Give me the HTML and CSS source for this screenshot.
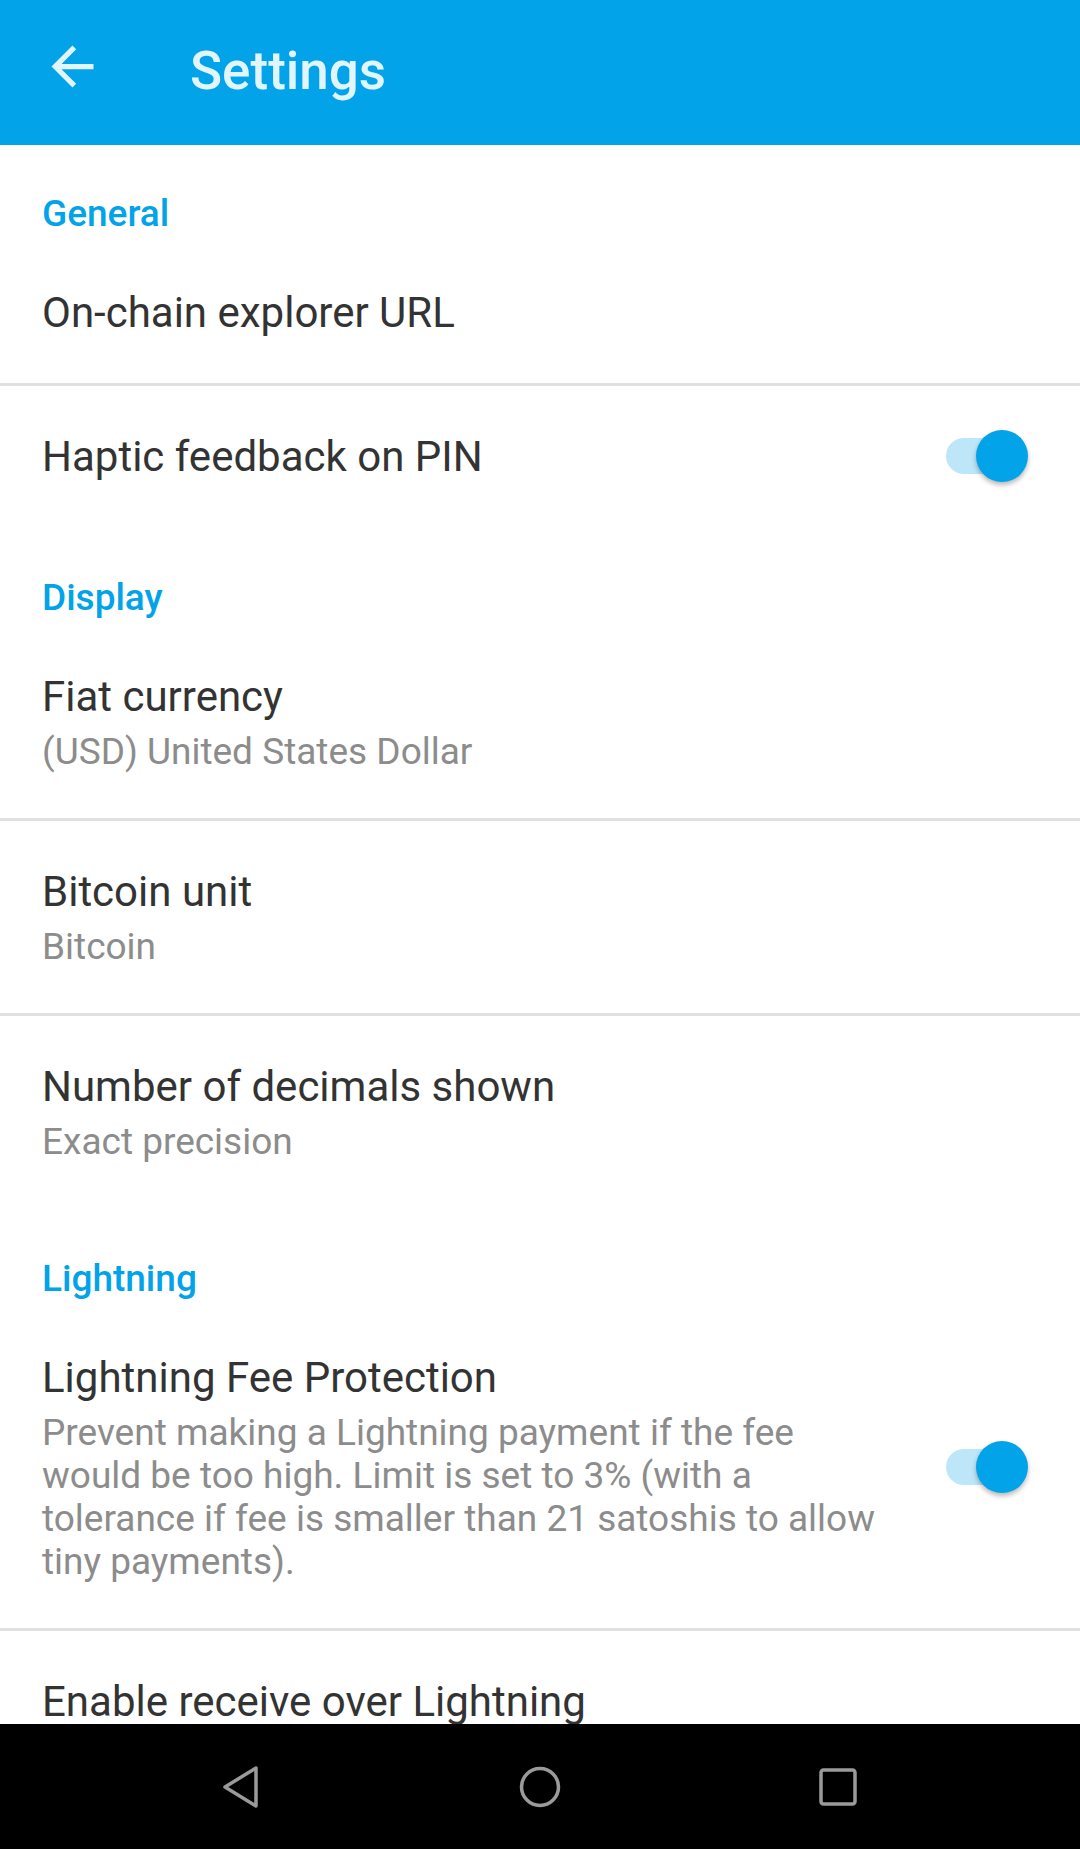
FILE: index.html
```html
<!DOCTYPE html>
<html lang="en">
<head>
<meta charset="utf-8">
<title>Settings</title>
<link rel="stylesheet" href="styles.css">
</head>
<body>
<div class="screen">
  <header class="appbar">
    <svg class="back" viewBox="0 0 24 24" width="63" height="63"><path d="M20 11H7.83l5.59-5.59L12 4l-8 8 8 8 1.41-1.41L7.83 13H20v-2z" fill="#E1F5FE"/></svg>
    <h1 class="appbar-title">Settings</h1>
  </header>

  <main class="content">
    <div class="category first">General</div>
    <div class="pref divided">
      <div class="pref-text"><div class="pref-title">On-chain explorer URL</div></div>
    </div>
    <div class="pref">
      <div class="pref-text"><div class="pref-title">Haptic feedback on PIN</div></div>
      <div class="switch"><span class="track"></span><span class="thumb"></span></div>
    </div>

    <div class="category">Display</div>
    <div class="pref divided">
      <div class="pref-text">
        <div class="pref-title">Fiat currency</div>
        <div class="pref-summary">(USD) United States Dollar</div>
      </div>
    </div>
    <div class="pref divided">
      <div class="pref-text">
        <div class="pref-title">Bitcoin unit</div>
        <div class="pref-summary">Bitcoin</div>
      </div>
    </div>
    <div class="pref">
      <div class="pref-text">
        <div class="pref-title">Number of decimals shown</div>
        <div class="pref-summary">Exact precision</div>
      </div>
    </div>

    <div class="category">Lightning</div>
    <div class="pref divided">
      <div class="pref-text">
        <div class="pref-title">Lightning Fee Protection</div>
        <div class="pref-summary">Prevent making a Lightning payment if the fee would be too high. Limit is set to 3% (with a tolerance if fee is smaller than 21 satoshis to allow tiny payments).</div>
      </div>
      <div class="switch"><span class="track"></span><span class="thumb"></span></div>
    </div>
    <div class="pref">
      <div class="pref-text"><div class="pref-title">Enable receive over Lightning</div></div>
    </div>
  </main>

  <nav class="navbar">
    <div class="nav-slot">
      <svg width="40" height="44" viewBox="0 0 40 44"><path d="M34 3 L34 41 L3 22 Z" fill="none" stroke="#9a9a9a" stroke-width="3.5" stroke-linejoin="round"/></svg>
    </div>
    <div class="nav-slot">
      <svg width="44" height="44" viewBox="0 0 44 44"><circle cx="22" cy="22" r="18.5" fill="none" stroke="#9a9a9a" stroke-width="3.5"/></svg>
    </div>
    <div class="nav-slot">
      <svg width="40" height="40" viewBox="0 0 40 40"><rect x="3" y="3" width="34" height="34" rx="2.5" fill="none" stroke="#9a9a9a" stroke-width="3.5"/></svg>
    </div>
  </nav>
</div>
</body>
</html>
```
FILE: styles.css
```css
* { box-sizing: border-box; }
html, body { margin: 0; padding: 0; }
body {
  width: 1080px;
  height: 1849px;
  overflow: hidden;
  background: #fff;
  font-family: Roboto, "Noto Sans", "Liberation Sans", sans-serif;
}
.screen {
  display: flex;
  flex-direction: column;
  height: 1849px;
}
.appbar {
  flex: 0 0 145px;
  background: #02a3e8;
  display: flex;
  align-items: center;
}
.back {
  margin-left: 41px;
  margin-bottom: 12px;
  flex: 0 0 63px;
}
.appbar-title {
  margin: 0 0 4px 86px;
  font-size: 53px;
  font-weight: 500;
  line-height: 64px;
  color: #E1F5FE;
}
.content {
  flex: 1;
  overflow: hidden;
}
.category {
  padding: 49px 42px 6px;
  font-size: 37px;
  line-height: 44px;
  font-weight: 500;
  color: #02a3e8;
}
.category.first { padding-top: 47px; }
.pref {
  display: flex;
  align-items: center;
  gap: 44px;
  padding: 46px 52px 45px 42px;
}
.pref.divided { border-bottom: 3px solid #e0e0e0; }
.pref-text { flex: 1; min-width: 0; }
.pref-title {
  font-size: 42px;
  line-height: 50px;
  color: #333;
}
.pref-summary {
  margin-top: 8px;
  font-size: 37px;
  line-height: 43px;
  color: #8c8c8c;
}
.switch {
  position: relative;
  flex: 0 0 82px;
  height: 52px;
  margin-top: -2px;
}
.track {
  position: absolute;
  left: 0;
  top: 8px;
  width: 76px;
  height: 36px;
  border-radius: 18px;
  background: #bde6f9;
}
.thumb {
  position: absolute;
  right: 0;
  top: 0;
  width: 52px;
  height: 52px;
  border-radius: 50%;
  background: #02a3e8;
  box-shadow: 0 3px 5px rgba(0,0,0,0.28);
}
.navbar {
  flex: 0 0 125px;
  background: #000;
  display: flex;
  justify-content: center;
  align-items: center;
}
.nav-slot {
  width: 298px;
  display: flex;
  justify-content: center;
  align-items: center;
}
.nav-slot svg { display: block; }
```
